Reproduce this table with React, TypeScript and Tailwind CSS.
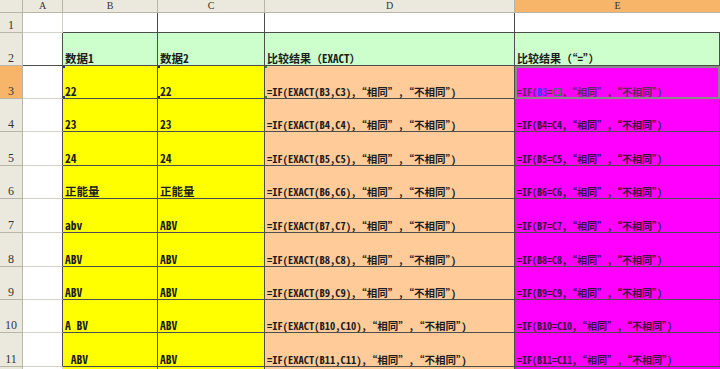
import React from "react";

const FONT = '"Noto Sans Mono CJK SC", "Liberation Mono", "Noto Sans CJK SC", monospace';
const SERIF = '"Liberation Serif", "Noto Sans CJK SC", serif';

type Row = { n: number; h: number; b: string; c: string; d: string; e: React.ReactNode };

const rows: Row[] = [
  { n: 3, h: 33, b: "22", c: "22", d: "=IF(EXACT(B3,C3),“相同”,“不相同”)", e: null },
  { n: 4, h: 33, b: "23", c: "23", d: "=IF(EXACT(B4,C4),“相同”,“不相同”)", e: "=IF(B4=C4,“相同”,“不相同”)" },
  { n: 5, h: 34, b: "24", c: "24", d: "=IF(EXACT(B5,C5),“相同”,“不相同”)", e: "=IF(B5=C5,“相同”,“不相同”)" },
  { n: 6, h: 33, b: "正能量", c: "正能量", d: "=IF(EXACT(B6,C6),“相同”,“不相同”)", e: "=IF(B6=C6,“相同”,“不相同”)" },
  { n: 7, h: 34, b: "abv", c: "ABV", d: "=IF(EXACT(B7,C7),“相同”,“不相同”)", e: "=IF(B7=C7,“相同”,“不相同”)" },
  { n: 8, h: 34, b: "ABV", c: "ABV", d: "=IF(EXACT(B8,C8),“相同”,“不相同”)", e: "=IF(B8=C8,“相同”,“不相同”)" },
  { n: 9, h: 33, b: "ABV", c: "ABV", d: "=IF(EXACT(B9,C9),“相同”,“不相同”)", e: "=IF(B9=C9,“相同”,“不相同”)" },
  { n: 10, h: 33, b: "A\u00a0BV", c: "ABV", d: "=IF(EXACT(B10,C10),“相同”,“不相同”)", e: "=IF(B10=C10,“相同”,“不相同”)" },
  { n: 11, h: 34, b: "\u00a0ABV", c: "ABV", d: "=IF(EXACT(B11,C11),“相同”,“不相同”)", e: "=IF(B11=C11,“相同”,“不相同”)" },
];

function RowHead({ n, h, active }: { n: React.ReactNode; h: number; active?: boolean }) {
  return (
    <div
      className={`flex items-end justify-center border-r border-b border-[#b9b6a8] pb-[1px] text-[12px] leading-none text-[#333] ${
        active ? "bg-[#f7b56a]" : "bg-[#ebe9dd]"
      }`}
      style={{ height: h, fontFamily: SERIF }}
    >
      {n}
    </div>
  );
}

function Cell({
  children,
  bg,
  size = "text-[11.5px]",
  className = "",
}: {
  children?: React.ReactNode;
  bg: string;
  size?: string;
  className?: string;
}) {
  return (
    <div
      className={`relative flex items-end overflow-hidden whitespace-nowrap border-r border-b border-[#4d4d4d] pl-[2px] pb-[1px] font-bold leading-none text-[#1c1c1c] ${size} ${bg} ${className}`}
    >
      {children}
    </div>
  );
}

function Handle({ color, pos }: { color: string; pos: string }) {
  return <div className={`absolute z-10 h-[4px] w-[4px] ${color} ${pos}`} />;
}

export default function App() {
  return (
    <div className="h-[369px] w-[720px] overflow-hidden bg-white" style={{ fontFamily: FONT }}>
      <div className="grid grid-cols-[23px_40px_95px_107px_250px_205px]">
        {/* column header */}
        <div className="h-[13px] border-r border-b border-[#b9b6a8] bg-[#ebe9dd]" />
        {["A", "B", "C", "D"].map((l) => (
          <div
            key={l}
            className="flex h-[13px] items-center justify-center border-r border-b border-[#b9b6a8] bg-[#ebe9dd] text-[10px] leading-none text-[#333]"
            style={{ fontFamily: SERIF }}
          >
            {l}
          </div>
        ))}
        <div
          className="flex h-[13px] items-center justify-center border-b border-[#b9b6a8] bg-[#f7b56a] text-[10px] leading-none text-[#333]"
          style={{ fontFamily: SERIF }}
        >
          E
        </div>

        {/* row 1 */}
        <RowHead n="1" h={20} />
        <div className="border-r border-b border-[#d4d2c8]" />
        <div className="border-r border-b border-[#4d4d4d]" />
        <div className="border-r border-b border-[#4d4d4d]" />
        <div className="border-r border-b border-[#4d4d4d]" />
        <div className="border-b border-[#4d4d4d]" />

        {/* row 2 */}
        <RowHead n="2" h={33} />
        <div className="border-r border-b border-[#4d4d4d]" />
        <Cell bg="bg-[#ccffcc]" size="text-[11.5px]">数据1</Cell>
        <Cell bg="bg-[#ccffcc]" size="text-[11.5px]">数据2</Cell>
        <Cell bg="bg-[#ccffcc]" size="text-[11px]">比较结果（EXACT）</Cell>
        <Cell bg="bg-[#ccffcc]" size="text-[11px]">比较结果（“=”）</Cell>

        {rows.map((r) => (
          <React.Fragment key={r.n}>
            <RowHead n={r.n} h={r.h} active={r.n === 3} />
            <div className="border-r border-b border-[#d4d2c8] border-r-[#4d4d4d]" />
            <Cell bg="bg-[#ffff00]">
              {r.n === 3 && (
                <>
                  <Handle color="bg-[#1f3a93]" pos="left-[-2px] top-[-2px]" />
                  <Handle color="bg-[#1f3a93]" pos="left-[-2px] bottom-[-2px]" />
                </>
              )}
              {r.b}
            </Cell>
            <Cell bg="bg-[#ffff00]">
              {r.n === 3 && (
                <>
                  <Handle color="bg-[#1f2a6a]" pos="left-[-2px] top-[-2px]" />
                  <Handle color="bg-[#1f2a6a]" pos="left-[-2px] bottom-[-2px]" />
                </>
              )}
              {r.c}
            </Cell>
            <Cell bg="bg-[#ffcc99]" size="text-[10.5px]">
              {r.n === 3 && (
                <>
                  <Handle color="bg-[#2f8a2f]" pos="left-[-2px] top-[-2px]" />
                  <Handle color="bg-[#2f8a2f]" pos="left-[-2px] bottom-[-2px]" />
                </>
              )}
              {r.d}
            </Cell>
            {r.n === 3 ? (
              <Cell bg="bg-[#ff00ff]" size="text-[10px]" className="border-[#7a7a7a] outline outline-2 outline-[#8a8a8a] -outline-offset-2 text-[#5a2a60]">
                =IF(<span className="text-[#3b3bff]">B3</span>=<span className="text-[#3a7a3a]">C3</span>,“相同”,“不相同”)
              </Cell>
            ) : (
              <Cell bg="bg-[#ff00ff]" size="text-[10px]" className="text-[#3a1240]">
                {r.e}
              </Cell>
            )}
          </React.Fragment>
        ))}

        {/* partial row 12 */}
        <div className="h-[2px] border-r border-[#b9b6a8] bg-[#ebe9dd]" />
        <div className="h-[2px] border-r border-[#d4d2c8]" />
        <div className="h-[2px] border-r border-[#4d4d4d] bg-[#ffff00]" />
        <div className="h-[2px] border-r border-[#4d4d4d] bg-[#ffff00]" />
        <div className="h-[2px] border-r border-[#4d4d4d] bg-[#ffcc99]" />
        <div className="h-[2px] bg-[#ff00ff]" />
      </div>
    </div>
  );
}
